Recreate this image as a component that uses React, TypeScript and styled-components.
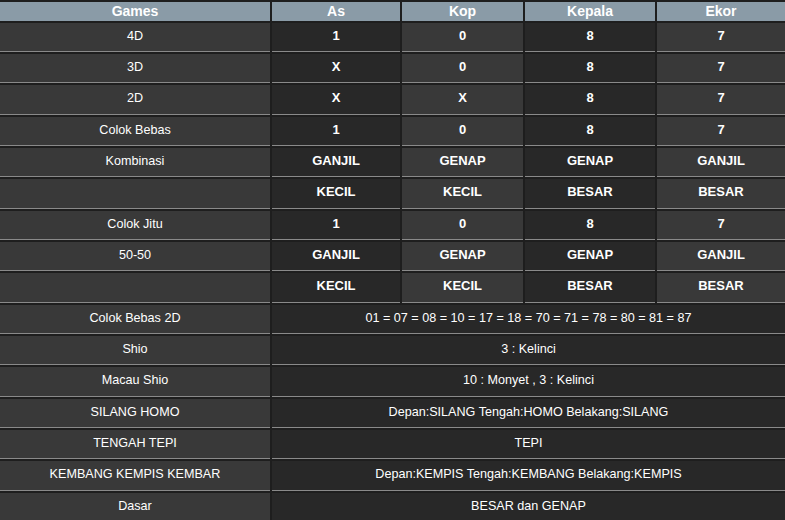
import styled, { createGlobalStyle } from "styled-components";

const colors = {
  page: "#1e1e1e",
  header: "#8a9ba7",
  light: "#393939",
  dark: "#282828",
  line: "#8a8a8a",
  white: "#ffffff",
};

const GlobalStyle = createGlobalStyle`
  html, body {
    margin: 0;
    padding: 0;
    background: ${colors.page};
    overflow: hidden;
  }
  body {
    font-family: "Liberation Sans", Arial, sans-serif;
  }
`;

const Wrapper = styled.div`
  width: 785px;
  height: 520px;
  overflow: hidden;
`;

const Table = styled.table`
  width: 789px;
  margin: 0 -2px;
  border-collapse: separate;
  border-spacing: 2px;
  table-layout: fixed;
  color: ${colors.white};
  font-size: 13px;
`;

const HeadCell = styled.th<{ $width?: number }>`
  width: ${(p) => (p.$width ? `${p.$width}px` : "auto")};
  background: ${colors.header};
  font-size: 14px;
  font-weight: bold;
  line-height: 18.6px;
  padding: 0;
  text-align: center;
`;

const Cell = styled.td<{ $tone: "light" | "dark"; $bold?: boolean }>`
  background: ${(p) => (p.$tone === "light" ? colors.light : colors.dark)};
  border-bottom: 1px solid ${colors.line};
  font-size: ${(p) => (p.$bold ? "13px" : "12.6px")};
  font-weight: ${(p) => (p.$bold ? "bold" : "normal")};
  line-height: 18.33px;
  padding: 4px 4px 6px;
  text-align: center;
  white-space: nowrap;
`;

type Row = { game: string; values: string[] };

const gridRows: Row[] = [
  { game: "4D", values: ["1", "0", "8", "7"] },
  { game: "3D", values: ["X", "0", "8", "7"] },
  { game: "2D", values: ["X", "X", "8", "7"] },
  { game: "Colok Bebas", values: ["1", "0", "8", "7"] },
  { game: "Kombinasi", values: ["GANJIL", "GENAP", "GENAP", "GANJIL"] },
  { game: "", values: ["KECIL", "KECIL", "BESAR", "BESAR"] },
  { game: "Colok Jitu", values: ["1", "0", "8", "7"] },
  { game: "50-50", values: ["GANJIL", "GENAP", "GENAP", "GANJIL"] },
  { game: "", values: ["KECIL", "KECIL", "BESAR", "BESAR"] },
];

const wideRows: [string, string][] = [
  ["Colok Bebas 2D", "01 = 07 = 08 = 10 = 17 = 18 = 70 = 71 = 78 = 80 = 81 = 87"],
  ["Shio", "3 : Kelinci"],
  ["Macau Shio", "10 : Monyet , 3 : Kelinci"],
  ["SILANG HOMO", "Depan:SILANG Tengah:HOMO Belakang:SILANG"],
  ["TENGAH TEPI", "TEPI"],
  ["KEMBANG KEMPIS KEMBAR", "Depan:KEMPIS Tengah:KEMBANG Belakang:KEMPIS"],
  ["Dasar", "BESAR dan GENAP"],
];

const columns: [string, number][] = [
  ["Games", 270],
  ["As", 128],
  ["Kop", 121],
  ["Kepala", 130],
  ["Ekor", 128],
];

export default function App() {
  return (
    <Wrapper>
      <GlobalStyle />
      <Table>
        <thead>
          <tr>
            {columns.map(([label, width]) => (
              <HeadCell key={label} $width={width}>
                {label}
              </HeadCell>
            ))}
          </tr>
        </thead>
        <tbody>
          {gridRows.map((row, i) => (
            <tr key={i}>
              <Cell $tone="light">{row.game}</Cell>
              {row.values.map((v, j) => (
                <Cell key={j} $tone={j % 2 === 0 ? "dark" : "light"} $bold>
                  {v}
                </Cell>
              ))}
            </tr>
          ))}
          {wideRows.map(([game, value]) => (
            <tr key={game}>
              <Cell $tone="light">{game}</Cell>
              <Cell $tone="dark" colSpan={4}>
                {value}
              </Cell>
            </tr>
          ))}
        </tbody>
      </Table>
    </Wrapper>
  );
}
